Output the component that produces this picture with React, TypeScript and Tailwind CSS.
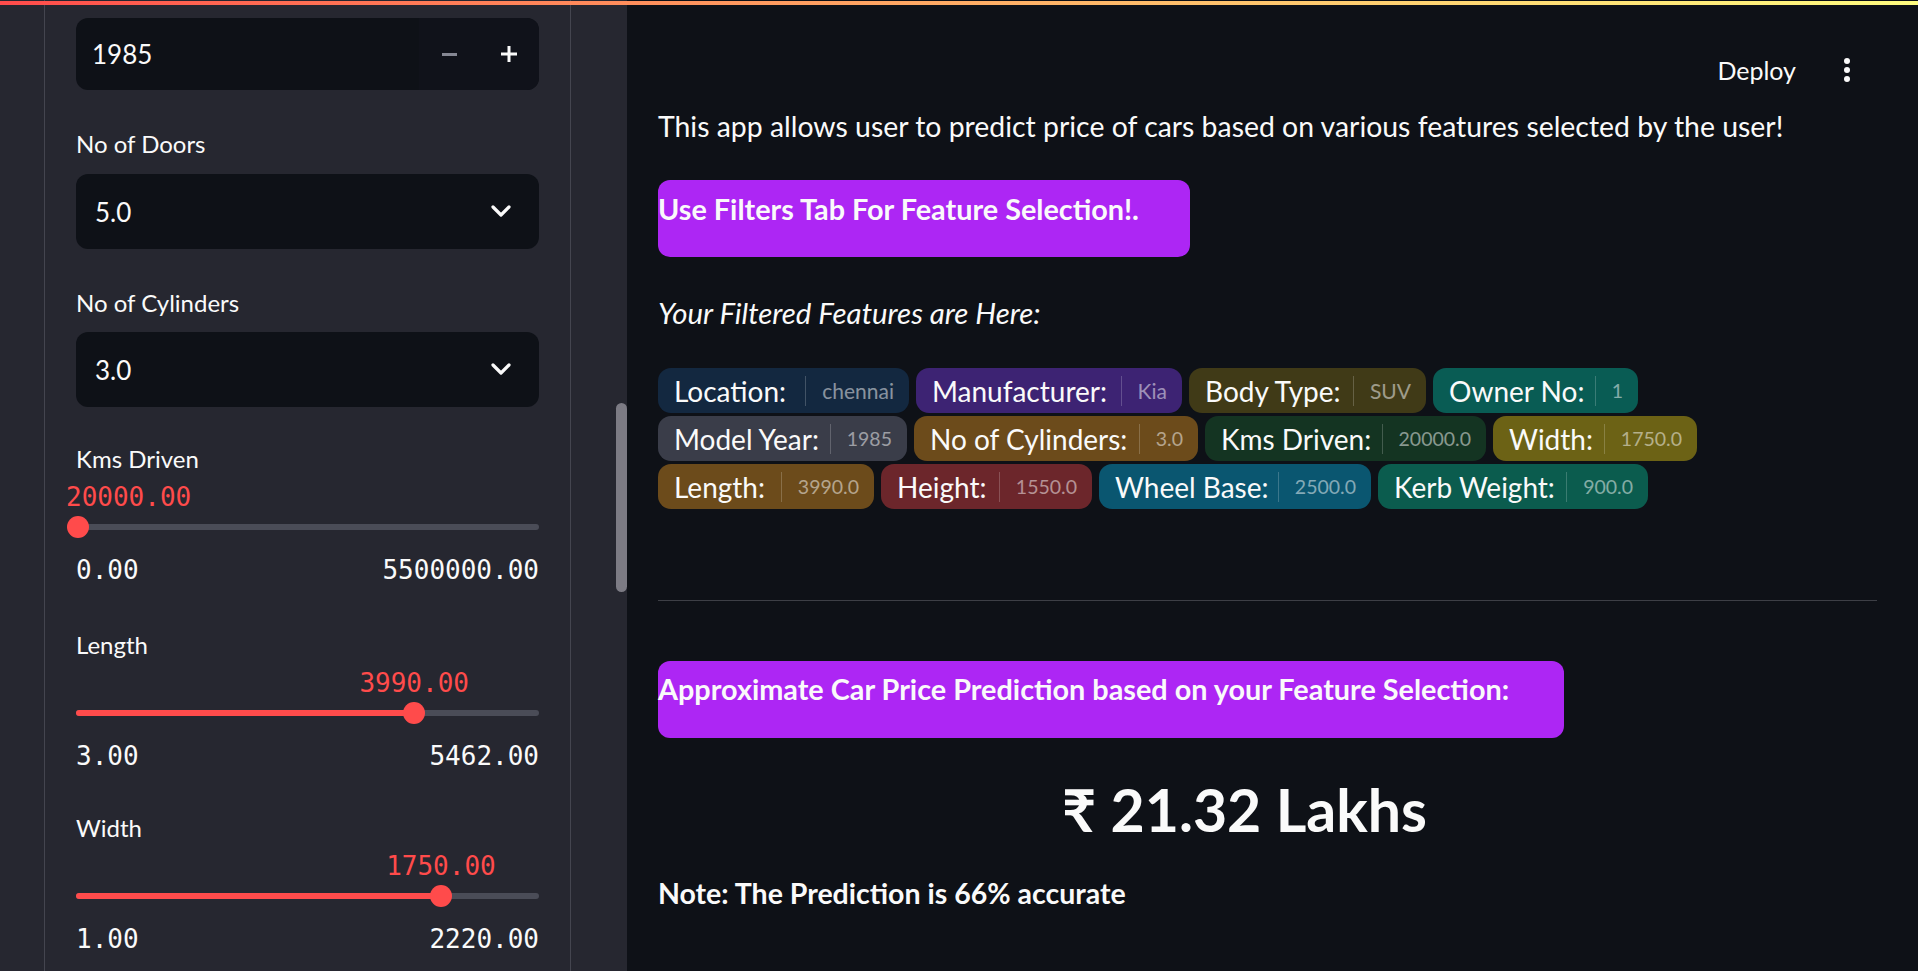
import React from "react";

const SANS = "font-['Lato','Noto_Sans',sans-serif]";
const MONO = "font-['DejaVu_Sans_Mono',monospace]";

type Badge = { label: string; value: string; bg: string; w: string };

const rows: Badge[][] = [
  [
    { label: "Location:", value: "chennai", bg: "bg-[#132840]", w: "w-[251px]" },
    { label: "Manufacturer:", value: "Kia", bg: "bg-[#3d2373]", w: "w-[266px]" },
    { label: "Body Type:", value: "SUV", bg: "bg-[#403a17]", w: "w-[237px]" },
    { label: "Owner No:", value: "1", bg: "bg-[#095c54]", w: "w-[205px]" },
  ],
  [
    { label: "Model Year:", value: "1985", bg: "bg-[#3a3d49]", w: "w-[249px]" },
    { label: "No of Cylinders:", value: "3.0", bg: "bg-[#6c4b1b]", w: "w-[284px]" },
    { label: "Kms Driven:", value: "20000.0", bg: "bg-[#143422]", w: "w-[281px]" },
    { label: "Width:", value: "1750.0", bg: "bg-[#6c6215]", w: "w-[204px]" },
  ],
  [
    { label: "Length:", value: "3990.0", bg: "bg-[#6c4b1b]", w: "w-[216px]" },
    { label: "Height:", value: "1550.0", bg: "bg-[#6c262b]", w: "w-[211px]" },
    { label: "Wheel Base:", value: "2500.0", bg: "bg-[#0a5670]", w: "w-[272px]" },
    { label: "Kerb Weight:", value: "900.0", bg: "bg-[#0b5c4e]", w: "w-[270px]" },
  ],
];

function Chevron() {
  return (
    <svg width="20" height="13" viewBox="0 0 20 13" fill="none">
      <polyline
        points="2,2 10,10 18,2"
        stroke="#fafafa"
        strokeWidth="3.2"
        strokeLinecap="round"
        strokeLinejoin="round"
      />
    </svg>
  );
}

function SelectBox({ value }: { value: string }) {
  return (
    <div className="flex h-[75px] items-center justify-between rounded-[12px] bg-[#0e1117] pl-[19px] pr-[28px]">
      <span className="text-[26px] leading-none text-[#fafafa]">{value}</span>
      <Chevron />
    </div>
  );
}

const TRACK_W = 463;
const CHAR_W = 15.65;

function Slider({
  label,
  value,
  min,
  max,
  mt,
}: {
  label: string;
  value: number;
  min: number;
  max: number;
  mt: string;
}) {
  const pos = ((value - min) / (max - min)) * TRACK_W;
  const text = value.toFixed(2);
  const w = text.length * CHAR_W;
  const left = Math.max(-10, pos - w / 2);
  return (
    <div className={mt}>
      <div className="flex h-[30px] items-center text-[24px] leading-none text-[#fafafa]">{label}</div>
      <div className="relative mt-[8px] h-[30px]">
        <span
          className={`absolute top-0 flex h-[30px] items-center whitespace-nowrap text-[26px] leading-none text-[#ff4b4b] ${MONO}`}
          style={{ left }}
        >
          {text}
        </span>
      </div>
      <div className="relative mt-[4px] flex h-[22px] items-center">
        <div className="h-[6px] w-full rounded-full bg-[#4a4c57]" />
        <div className="absolute left-0 h-[6px] rounded-full bg-[#ff4b4b]" style={{ width: pos }} />
        <div
          className="absolute top-0 h-[22px] w-[22px] rounded-full bg-[#ff4b4b]"
          style={{ left: pos - 11 }}
        />
      </div>
      <div className={`mt-[17px] flex h-[30px] items-center justify-between text-[26px] leading-none text-[#fafafa] ${MONO}`}>
        <span>{min.toFixed(2)}</span>
        <span>{max.toFixed(2)}</span>
      </div>
    </div>
  );
}

function Sidebar() {
  return (
    <div className="relative h-[971px] w-[627px] shrink-0 overflow-hidden bg-[#262730]">
      <div className="ml-[44px] h-full w-[527px] border-x border-[#44454f] px-[31px] pt-[18px]">
        {/* number input */}
        <div className="flex h-[72px] overflow-hidden rounded-[12px] bg-[#0e1117]">
          <div className="flex flex-1 items-center pl-[16px] text-[26px] leading-none text-[#fafafa]">1985</div>
          <div className="flex w-[120px] items-center bg-[#10121a]">
            <div className="flex w-[60px] items-center justify-center">
              <div className="h-[3px] w-[15px] bg-[#858793]" />
            </div>
            <div className="flex w-[60px] items-center justify-center">
              <svg width="16" height="16" viewBox="0 0 16 16">
                <rect x="6.5" y="0" width="3" height="16" fill="#fafafa" />
                <rect x="0" y="6.5" width="16" height="3" fill="#fafafa" />
              </svg>
            </div>
          </div>
        </div>

        <div className="mt-[39px] flex h-[30px] items-center text-[24px] leading-none text-[#fafafa]">No of Doors</div>
        <div className="mt-[15px]">
          <SelectBox value="5.0" />
        </div>

        <div className="mt-[39px] flex h-[30px] items-center text-[24px] leading-none text-[#fafafa]">No of Cylinders</div>
        <div className="mt-[14px]">
          <SelectBox value="3.0" />
        </div>

        <Slider label="Kms Driven" value={20000} min={0} max={5500000} mt="mt-[37px]" />
        <Slider label="Length" value={3990} min={3} max={5462} mt="mt-[45px]" />
        <Slider label="Width" value={1750} min={1} max={2220} mt="mt-[42px]" />
      </div>
      {/* scrollbar */}
      <div className="absolute left-[616px] top-[403px] h-[189px] w-[11px] rounded-full bg-[#7c7b84]" />
    </div>
  );
}

function BadgeView({ b }: { b: Badge }) {
  const numeric = /^[0-9.]+$/.test(b.value);
  return (
    <div className={`flex h-[45px] shrink-0 items-center rounded-[13px] pl-[16px] pr-[15px] ${b.w} ${b.bg}`}>
      <span className="whitespace-nowrap text-[28px] leading-none text-[#fafafa]">{b.label}</span>
      <span
        className={`ml-auto flex h-[30px] items-center whitespace-nowrap border-l border-white/20 pl-[16px] leading-none text-white/50 ${
          numeric ? "text-[19.5px]" : "text-[21px]"
        }`}
      >
        {b.value}
      </span>
    </div>
  );
}

function Main() {
  return (
    <div className="flex h-[971px] flex-1 flex-col bg-[#0e1117] text-[#fafafa]">
      {/* header */}
      <div className="mt-[55px] flex h-[30px] items-center justify-end pr-[68px]">
        <span className="text-[25px] leading-none text-[#fafafa]">Deploy</span>
        <div className="ml-[48px] flex flex-col items-center gap-[3px]">
          <div className="h-[6px] w-[6px] rounded-full bg-[#fafafa]" />
          <div className="h-[6px] w-[6px] rounded-full bg-[#fafafa]" />
          <div className="h-[6px] w-[6px] rounded-full bg-[#fafafa]" />
        </div>
      </div>

      <div className="pl-[31px] pr-[41px]">
        <p className="mt-[22px] flex h-[38px] items-center whitespace-nowrap text-[28.4px] leading-none">
          This app allows user to predict price of cars based on various features selected by the user!
        </p>

        <div className="mt-[35px] h-[77px] w-[532px] rounded-[12px] bg-[#ad26f4] pt-[10px]">
          <div className="flex h-[38px] items-center whitespace-nowrap text-[28.8px] font-bold leading-none">
            Use Filters Tab For Feature Selection!.
          </div>
        </div>

        <p className="mt-[37px] flex h-[38px] items-center whitespace-nowrap text-[29.4px] italic leading-none">
          Your Filtered Features are Here:
        </p>

        <div className="mt-[36px] flex flex-col gap-[3px]">
          {rows.map((r, i) => (
            <div key={i} className="flex gap-[7px]">
              {r.map((b) => (
                <BadgeView key={b.label} b={b} />
              ))}
            </div>
          ))}
        </div>

        <div className="mt-[91px] h-px w-full bg-[#3d3f46]" />

        <div className="mt-[60px] h-[77px] w-[906px] rounded-[12px] bg-[#ad26f4] pt-[9px]">
          <div className="flex h-[38px] items-center whitespace-nowrap text-[28.8px] font-bold leading-none">
            Approximate Car Price Prediction based on your Feature Selection:
          </div>
        </div>

        <div className="mt-[31px] flex h-[80px] items-center justify-center pr-[46px] text-[59px] font-bold leading-none">
          ₹ 21.32 Lakhs
        </div>

        <p className="mt-[25px] flex h-[38px] items-center whitespace-nowrap text-[28.5px] font-bold leading-none">
          Note: The Prediction is 66% accurate
        </p>
      </div>
    </div>
  );
}

export default function App() {
  return (
    <div className={`relative flex h-[971px] w-[1918px] overflow-hidden ${SANS}`}>
      <Sidebar />
      <Main />
      <div className="absolute left-0 top-[1px] h-[4px] w-full bg-gradient-to-r from-[#ff4b4b] to-[#fffd80]" />
    </div>
  );
}
